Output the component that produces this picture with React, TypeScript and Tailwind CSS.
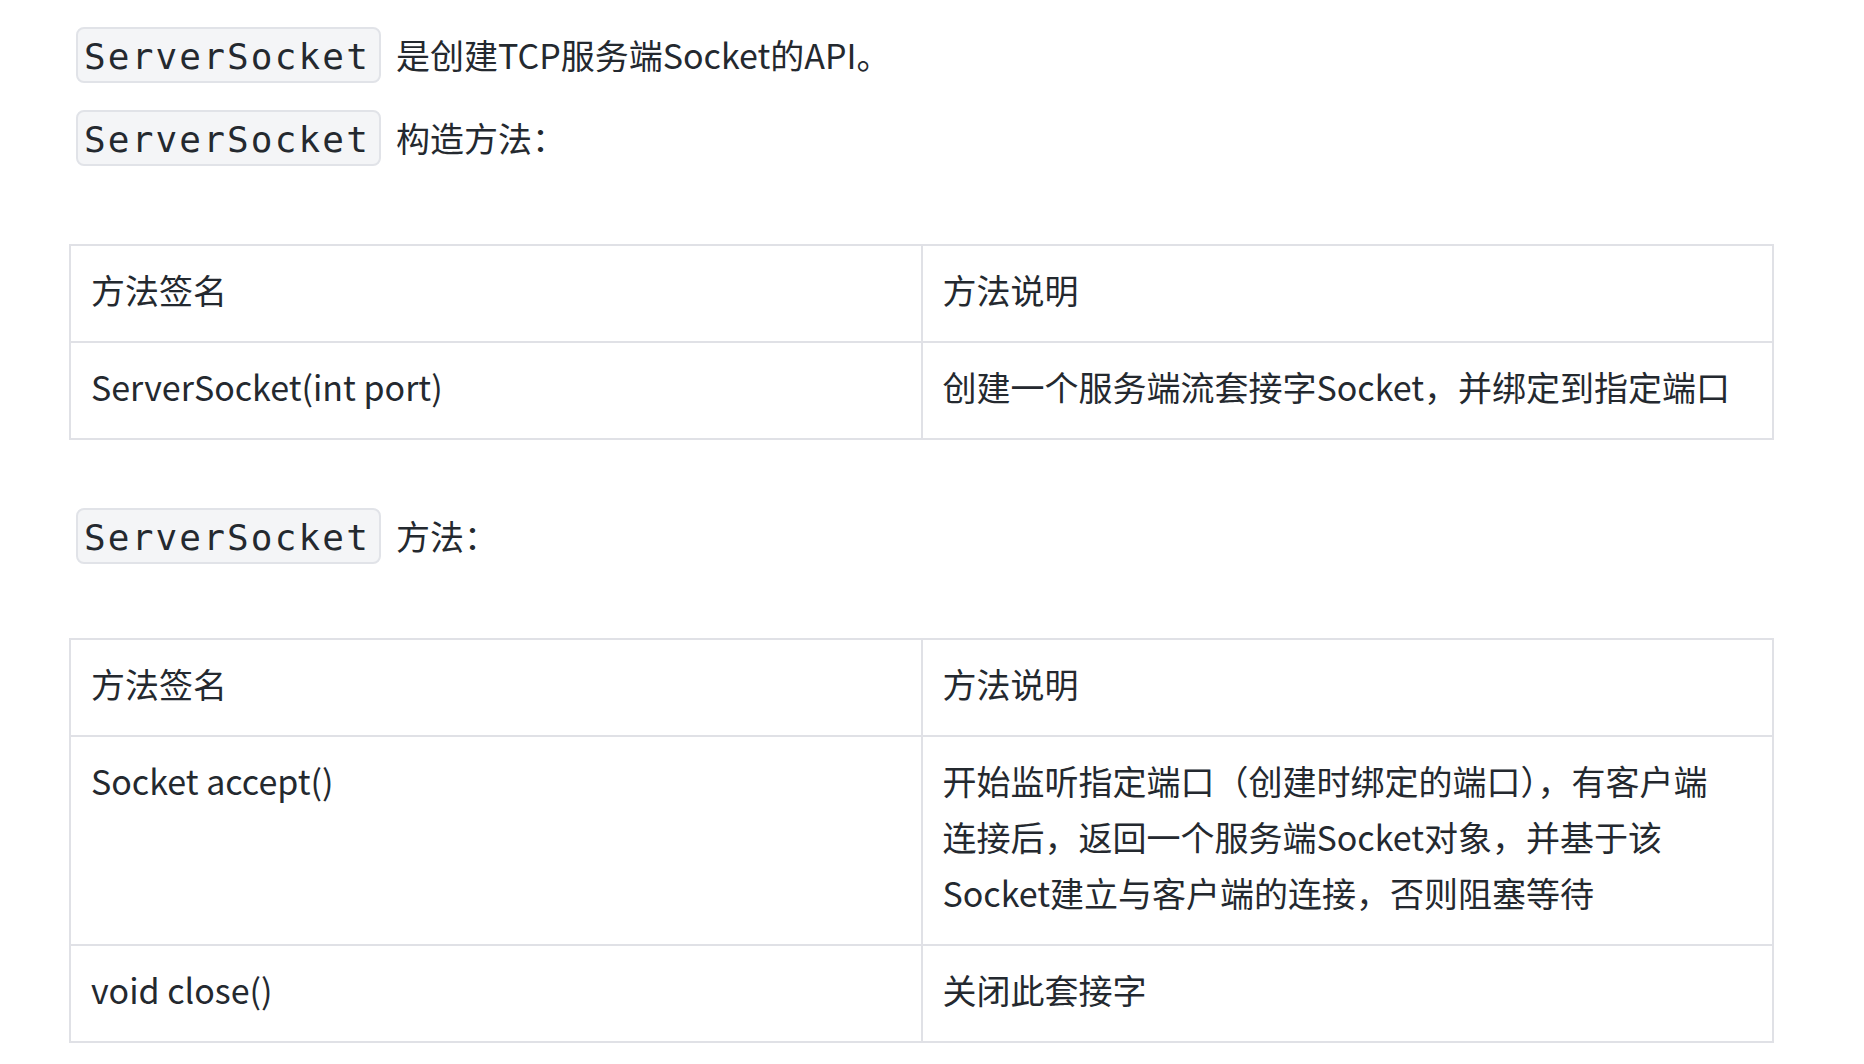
import React from "react";

const Code = ({ children }: { children: React.ReactNode }) => (
  <code className="inline-flex h-[56px] items-center rounded-[8px] border-2 border-[#e1e3e8] bg-[#f4f5f7] pl-[6px] pr-[9px] pt-[3px] font-['DejaVu_Sans_Mono',monospace] text-[36px] tracking-[0.06em] text-[#24292f]">
    {children}
  </code>
);

const Line = ({ label, className = "" }: { label: string; className?: string }) => (
  <p className={`flex h-[56px] items-center pl-[7px] ${className}`}>
    <Code>ServerSocket</Code>
    <span className="ml-[15px]">{label}</span>
  </p>
);

const cell = "border-2 border-[#e0e1e6] pl-[20px] pt-[16px] pb-[23px] text-left align-top font-normal";

const Table = ({ rows, className = "" }: { rows: [string, string][]; className?: string }) => (
  <table className={`w-[1705px] table-fixed border-collapse ${className}`}>
    <thead>
      <tr>
        <th className={`w-1/2 pr-[20px] ${cell}`}>方法签名</th>
        <th className={`w-1/2 pr-[40px] ${cell}`}>方法说明</th>
      </tr>
    </thead>
    <tbody>
      {rows.map(([sig, desc]) => (
        <tr key={sig}>
          <td className={`pr-[20px] ${cell}`}>{sig}</td>
          <td className={`pr-[40px] ${cell}`}>{desc}</td>
        </tr>
      ))}
    </tbody>
  </table>
);

export default function App() {
  return (
    <div className="min-h-screen bg-white pl-[69px] pt-[27px] font-['Noto_Sans_CJK_SC',sans-serif] text-[34px] leading-[56px] text-[#24292f]">
      <Line label="是创建TCP服务端Socket的API。" />
      <Line label="构造方法：" className="mt-[27px]" />
      <Table
        className="mt-[78px]"
        rows={[["ServerSocket(int port)", "创建一个服务端流套接字Socket，并绑定到指定端口"]]}
      />
      <Line label="方法：" className="mt-[68px]" />
      <Table
        className="mt-[74px]"
        rows={[
          [
            "Socket accept()",
            "开始监听指定端口（创建时绑定的端口），有客户端连接后，返回一个服务端Socket对象，并基于该Socket建立与客户端的连接，否则阻塞等待",
          ],
          ["void close()", "关闭此套接字"],
        ]}
      />
    </div>
  );
}
